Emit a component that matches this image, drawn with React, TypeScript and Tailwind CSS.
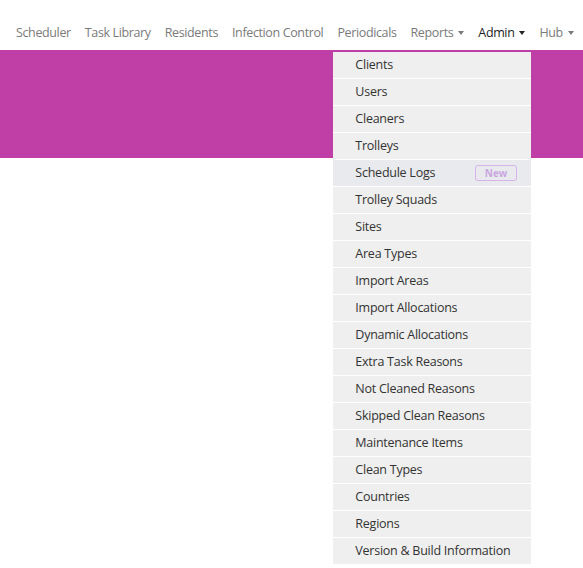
import { useState } from "react";

const navItems = [
  { label: "Scheduler" },
  { label: "Task Library" },
  { label: "Residents" },
  { label: "Infection Control" },
  { label: "Periodicals" },
  { label: "Reports", caret: true },
  { label: "Admin", caret: true, active: true },
  { label: "Hub", caret: true },
];

const adminItems = [
  "Clients",
  "Users",
  "Cleaners",
  "Trolleys",
  "Schedule Logs",
  "Trolley Squads",
  "Sites",
  "Area Types",
  "Import Areas",
  "Import Allocations",
  "Dynamic Allocations",
  "Extra Task Reasons",
  "Not Cleaned Reasons",
  "Skipped Clean Reasons",
  "Maintenance Items",
  "Clean Types",
  "Countries",
  "Regions",
  "Version & Build Information",
];

function Caret() {
  return <span className="ml-[5px] inline-block h-0 w-0 border-x-[3px] border-t-[4px] border-x-transparent border-t-current align-middle" />;
}

function AdminMenu() {
  return (
    <div className="absolute left-[-145px] top-[28px] z-10 flex w-[198px] flex-col gap-px bg-white">
      {adminItems.map((item) => (
        <a
          key={item}
          href="#"
          className={
            "flex h-[26px] items-center justify-between whitespace-nowrap pl-[22px] pr-[14px] text-[12.5px] tracking-[-0.25px] text-[#333] " +
            (item === "Schedule Logs" ? "bg-[#e9eaee]" : "bg-[#efefef]")
          }
        >
          <span>{item}</span>
          {item === "Schedule Logs" && (
            <span className="rounded-[3px] border border-[#d6b3ea] px-[9px] text-[10px] font-bold leading-[14px] tracking-normal text-[#c9a6e0]">New</span>
          )}
        </a>
      ))}
    </div>
  );
}

export default function App() {
  const [open] = useState(true);

  return (
    <div className="min-h-[568px] bg-white font-['Open_Sans',sans-serif]">
      <nav className="flex h-[50px] items-end gap-[14px] pb-[8px] pl-[16px]">
        {navItems.map((item) => (
          <div key={item.label} className="relative">
            <a
              href="#"
              className={
                "flex items-center whitespace-nowrap text-[12.5px] leading-[18px] tracking-[-0.37px] " +
                (item.active ? "text-[#222]" : "text-[#7a7a7a]")
              }
            >
              {item.label}
              {item.caret && <Caret />}
            </a>
            {item.active && open && <AdminMenu />}
          </div>
        ))}
      </nav>
      <div className="h-[108px] bg-[#c03fa6]" />
    </div>
  );
}
